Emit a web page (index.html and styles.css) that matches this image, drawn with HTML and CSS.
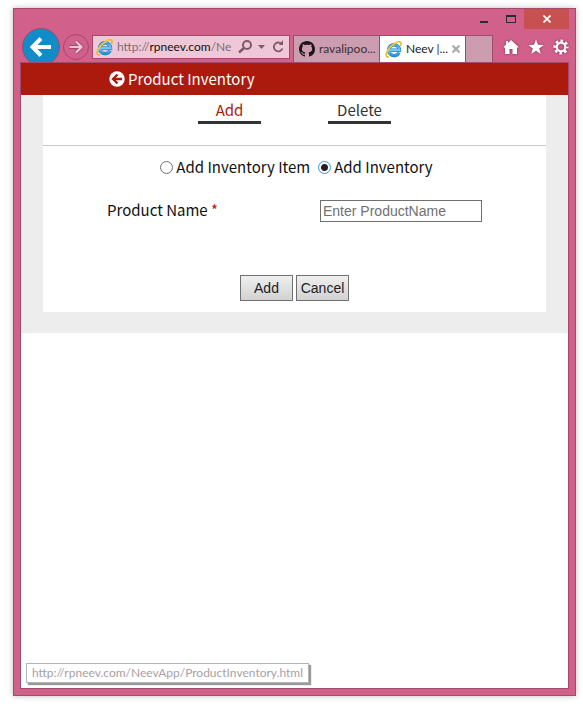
FILE: index.html
```html
<!DOCTYPE html>
<html lang="en">
<head>
<meta charset="utf-8">
<title>Product Inventory</title>
<link rel="stylesheet" href="styles.css">
</head>
<body>
<svg class="defs" aria-hidden="true">
  <defs>
    <linearGradient id="blue" x1="0" y1="0" x2="0" y2="1"><stop offset="0" stop-color="#3aa5df"/><stop offset=".5" stop-color="#73cdf4"/><stop offset="1" stop-color="#2b93d4"/></linearGradient>
  </defs>
  <symbol id="ie" viewBox="0 0 17 17">
    <path d="M14 11.500A5.400 5.400 0 1 1 14.500 9.300H5" fill="none" stroke="#1976b8" stroke-width="3.400"/>
    <path d="M14 11.500A5.400 5.400 0 1 1 14.500 9.300H5" fill="none" stroke="url(#blue)" stroke-width="2.400"/>
    <path d="M4 15.600C.6 17 .2 13.500 2.600 9.400C6 3.500 13 -.4 15.400 1.200C16.400 2 16.200 3.500 15.600 5" fill="none" stroke="#f0b51a" stroke-width="1.500"/>
    <path d="M1.500 12.500C3 8 8.500 2.500 13 1.300" fill="none" stroke="#ffe36a" stroke-width=".7"/>
  </symbol>
</svg>
<div class="window">
  <div class="titlebar">
    <button class="caption" aria-label="Minimize"><svg width="8" height="8"><path d="M0 6h8v2H0z" fill="#2b2b2b"/></svg></button>
    <button class="caption" aria-label="Maximize"><svg width="10" height="8"><path d="M0 0h10v8H0zM1 2v5h8V2z" fill="#2b2b2b" fill-rule="evenodd"/></svg></button>
    <button class="caption close" aria-label="Close"><svg width="8" height="8"><path d="M.5.5l7 7M7.500.5l-7 7" stroke="#fff" stroke-width="1.700"/></svg></button>
  </div>
  <div class="toolbar">
    <button class="round back" aria-label="Back"><svg width="22" height="20" viewBox="0 0 22 20"><path d="M21 10H3M11 1.500L2.500 10l8.500 8.500" fill="none" stroke="#fff" stroke-width="4"/></svg></button>
    <button class="round forward" aria-label="Forward"><svg width="16" height="14" viewBox="0 0 16 14"><path d="M1 7h12M8 1.500L13.500 7 8 12.500" fill="none" stroke="#a04a6c" stroke-width="4"/><path d="M1.500 7h12M8 1.500L13.500 7 8 12.500" fill="none" stroke="#efc4d5" stroke-width="2.200"/></svg></button>
    <div class="address">
      <svg width="17" height="17"><use href="#ie"/></svg>
      <span class="url">http://<b>rpneev.com</b>/Ne</span>
      <svg width="48" height="16" viewBox="0 0 48 16"><g fill="none" stroke="#7e5a69"><circle cx="9" cy="6" r="4" stroke-width="2"/><path d="M6 9l-5 4.500" stroke-width="2.500"/><path d="M43.500 4.900A4.400 4.400 0 1 0 44.400 9.500" stroke-width="1.800"/></g><path d="M20 6h7l-3.500 4zM41 6h4V1z" fill="#7e5a69"/></svg>
    </div>
    <div class="tabs">
      <button class="tab"><svg width="16" height="16" viewBox="0 0 16 16"><path fill="#1b1718" d="M8 0C3.580 0 0 3.580 0 8c0 3.540 2.290 6.530 5.470 7.590.4.070.55-.17.55-.38 0-.19-.01-.82-.01-1.490-2.010.37-2.530-.49-2.690-.94-.09-.23-.48-.94-.82-1.130-.28-.15-.68-.52-.01-.53.63-.01 1.080.58 1.230.82.72 1.210 1.870.87 2.330.66.070-.52.280-.87.510-1.070-1.780-.2-3.640-.89-3.640-3.950 0-.87.310-1.590.82-2.150-.08-.2-.36-1.020.08-2.120 0 0 .67-.21 2.200.82.64-.18 1.320-.27 2-.27s1.360.09 2 .27c1.530-1.040 2.200-.82 2.200-.82.440 1.100.160 1.920.080 2.120.510.560.820 1.270.820 2.150 0 3.070-1.870 3.750-3.650 3.950.290.250.540.730.540 1.480 0 1.070-.01 1.930-.01 2.200 0 .210.150.460.550.380A8 8 0 0 0 16 8c0-4.420-3.580-8-8-8z"/></svg><span>ravalipoo...</span></button>
      <button class="tab active"><svg width="17" height="17"><use href="#ie"/></svg><span>Neev |...</span><svg width="8" height="8"><path d="M.5.5l7 7M7.500.5l-7 7" stroke="#aaa" stroke-width="2.200"/></svg></button>
      <button class="tab new" aria-label="New tab"></button>
    </div>
    <div class="actions">
      <button class="action" aria-label="Home"><svg width="16" height="16" viewBox="0 0 16 16"><path d="M8 1l7.500 7-1.500 1v6H9.500v-5h-3v5H2V9L.5 8 3 5.500V2h2v2z"/></svg></button>
      <button class="action" aria-label="Favorites"><svg width="16" height="16" viewBox="0 0 16 16"><path d="M8 .5l2 5.300 5.700.2-4.500 3.500 1.600 5.500L8 11.800 3.200 15l1.600-5.500L.3 6 6 5.800z"/></svg></button>
      <button class="action" aria-label="Tools"><svg width="16" height="16" viewBox="0 0 16 16"><g fill="none" stroke="#fff"><circle cx="8" cy="8" r="4.300" stroke-width="2.200"/><circle cx="8" cy="8" r="6.300" stroke-width="2.600" stroke-dasharray="2.600 2.348" stroke-dashoffset="1.300"/></g></svg></button>
    </div>
  </div>
  <main class="page">
    <header class="header">
      <a href="#" aria-label="Back to menu"><svg width="16" height="16" viewBox="0 0 16 16"><circle cx="8" cy="8" r="7.700" fill="#fff"/><path d="M13 8H5M8.500 3.500L4 8l4.500 4.500" fill="none" stroke="#ab1a0d" stroke-width="2.300"/></svg></a>
      <h1>Product Inventory</h1>
    </header>
    <div class="backdrop">
      <div class="card">
        <nav class="modes"><a class="current" href="#">Add</a><a href="#">Delete</a></nav>
        <form>
          <div class="choices">
            <label><input type="radio" name="kind">Add Inventory Item</label>
            <label><input type="radio" name="kind" checked>Add Inventory</label>
          </div>
          <div class="field">
            <label for="product">Product Name <span class="required">*</span></label>
            <input id="product" type="text" placeholder="Enter ProductName">
          </div>
          <div class="buttons"><button type="button">Add</button><button type="button">Cancel</button></div>
        </form>
      </div>
    </div>
    <div class="status">http://rpneev.com/NeevApp/ProductInventory.html</div>
  </main>
</div>
</body>
</html>
```
FILE: styles.css
```css
* { box-sizing: border-box; }
body {
  margin: 0;
  min-height: 100vh;
  padding: 8px 7px 20px 13px;
  display: flex;
  background: #fff;
  font: 15px/20px "Noto Sans CJK SC", sans-serif;
  color: #111;
}
button { font: inherit; padding: 0; border: 0; background: none; }
svg { display: block; flex: none; }
a { text-decoration: none; }
.defs { position: absolute; width: 0; height: 0; }
.window {
  flex: 1;
  min-width: 0;
  display: flex;
  flex-direction: column;
  padding: 0 6px 6px;
  background: #d1608a;
  border: 1px solid #a34b6d;
  box-shadow: 0 0 6px rgba(0, 0, 0, .25);
}
.titlebar { display: flex; justify-content: flex-end; height: 20px; }
.caption { width: 27px; display: flex; align-items: center; justify-content: center; }
.caption.close { width: 45px; background: #c75050; }
.toolbar { display: flex; height: 33px; padding-top: 6px; padding-left: 2px; }
.round {
  flex: none;
  display: flex;
  align-items: center;
  justify-content: center;
  border: 1px solid #a04a6c;
  border-radius: 50%;
}
.back { width: 38px; height: 38px; margin-top: -7px; background: #128bc9; }
.forward { width: 26px; height: 26px; margin: -1px 3px 0; }
.address {
  flex: 1;
  min-width: 0;
  height: 24px;
  margin-right: 3px;
  padding: 0 3px;
  display: flex;
  align-items: center;
  background: #efc8d7;
  border: 1px solid #a04a6c;
}
.url, .tab, .status { font-family: Lato, sans-serif; font-size: 12px; }
.url {
  flex: 1;
  min-width: 0;
  margin-left: 4px;
  white-space: nowrap;
  color: #806b74;
}
.url b { font-weight: 400; color: #111; }
.tabs { display: flex; flex: none; }
.tab {
  display: flex;
  align-items: center;
  gap: 4px;
  width: 87px;
  padding-left: 5px;
  white-space: nowrap;
  color: #3d3036;
  background: #cc9caf;
  border: 1px solid #a04a6c;
  border-bottom: 0;
}
.tab.active { width: 86px; background: #fff; color: #222; border-left: 0; }
.tab.new { width: 27px; border-left: 0; }
.actions { display: flex; gap: 9px; height: 24px; margin-left: 10px; flex: none; }
.action svg { fill: #fff; overflow: visible; filter: drop-shadow(0 0 1px #7c2f4c); }
.page {
  position: relative;
  flex: 1;
  background: #fff;
  border: 1px solid #a34b6d;
}
.header { display: flex; align-items: center; gap: 3px; height: 32px; padding-left: 88px; background: #ab1a0d; }
.header h1 { margin: 0; font-size: 15px; font-weight: 400; color: #fff; }
.backdrop { padding: 0 22px 21px; background: #ededed; }
.card { background: #fff; padding-bottom: 11px; }
.modes {
  display: flex;
  justify-content: center;
  gap: 67px;
  padding: 5px 0 21px;
  border-bottom: 1px solid #c8c8c8;
}
.modes a { width: 63px; height: 24px; text-align: center; color: #333; border-bottom: 3px solid #333; }
.modes .current { color: #ab1a0d; }
.choices { display: flex; justify-content: center; gap: 8px; padding: 11px 0 0 4px; }
.choices label { display: flex; align-items: center; gap: 3px; }
.choices input {
  appearance: none;
  width: 13px;
  height: 13px;
  margin: 0;
  border: 1px solid #707070;
  border-radius: 50%;
  background: #fff;
}
.choices input:checked { border-color: #2a9fd8; background: radial-gradient(circle, #222 3px, #fff 4px); }
.field { display: flex; justify-content: space-between; align-items: flex-start; margin-top: 23px; padding: 0 64px; }
.required { color: #b81408; }
.field input {
  width: 162px;
  height: 22px;
  padding: 0 2px;
  border: 1px solid #707070;
  font: 14px "Liberation Sans", sans-serif;
}
.field input::placeholder { color: #707070; }
.buttons { display: flex; justify-content: center; gap: 3px; margin-top: 53px; }
.buttons button {
  width: 53px;
  height: 26px;
  border: 1px solid #707070;
  background: linear-gradient(#efefef, #d2d2d2);
  font: 14px "Liberation Sans", sans-serif;
  color: #222;
}
.status {
  position: absolute;
  left: 5px;
  bottom: 5px;
  height: 20px;
  padding: 0 5px;
  border: 1px solid #b4b4b4;
  background: #fff;
  box-shadow: 2px 2px 1px #999;
  line-height: 18px;
  color: #aaa0a5;
}
```
